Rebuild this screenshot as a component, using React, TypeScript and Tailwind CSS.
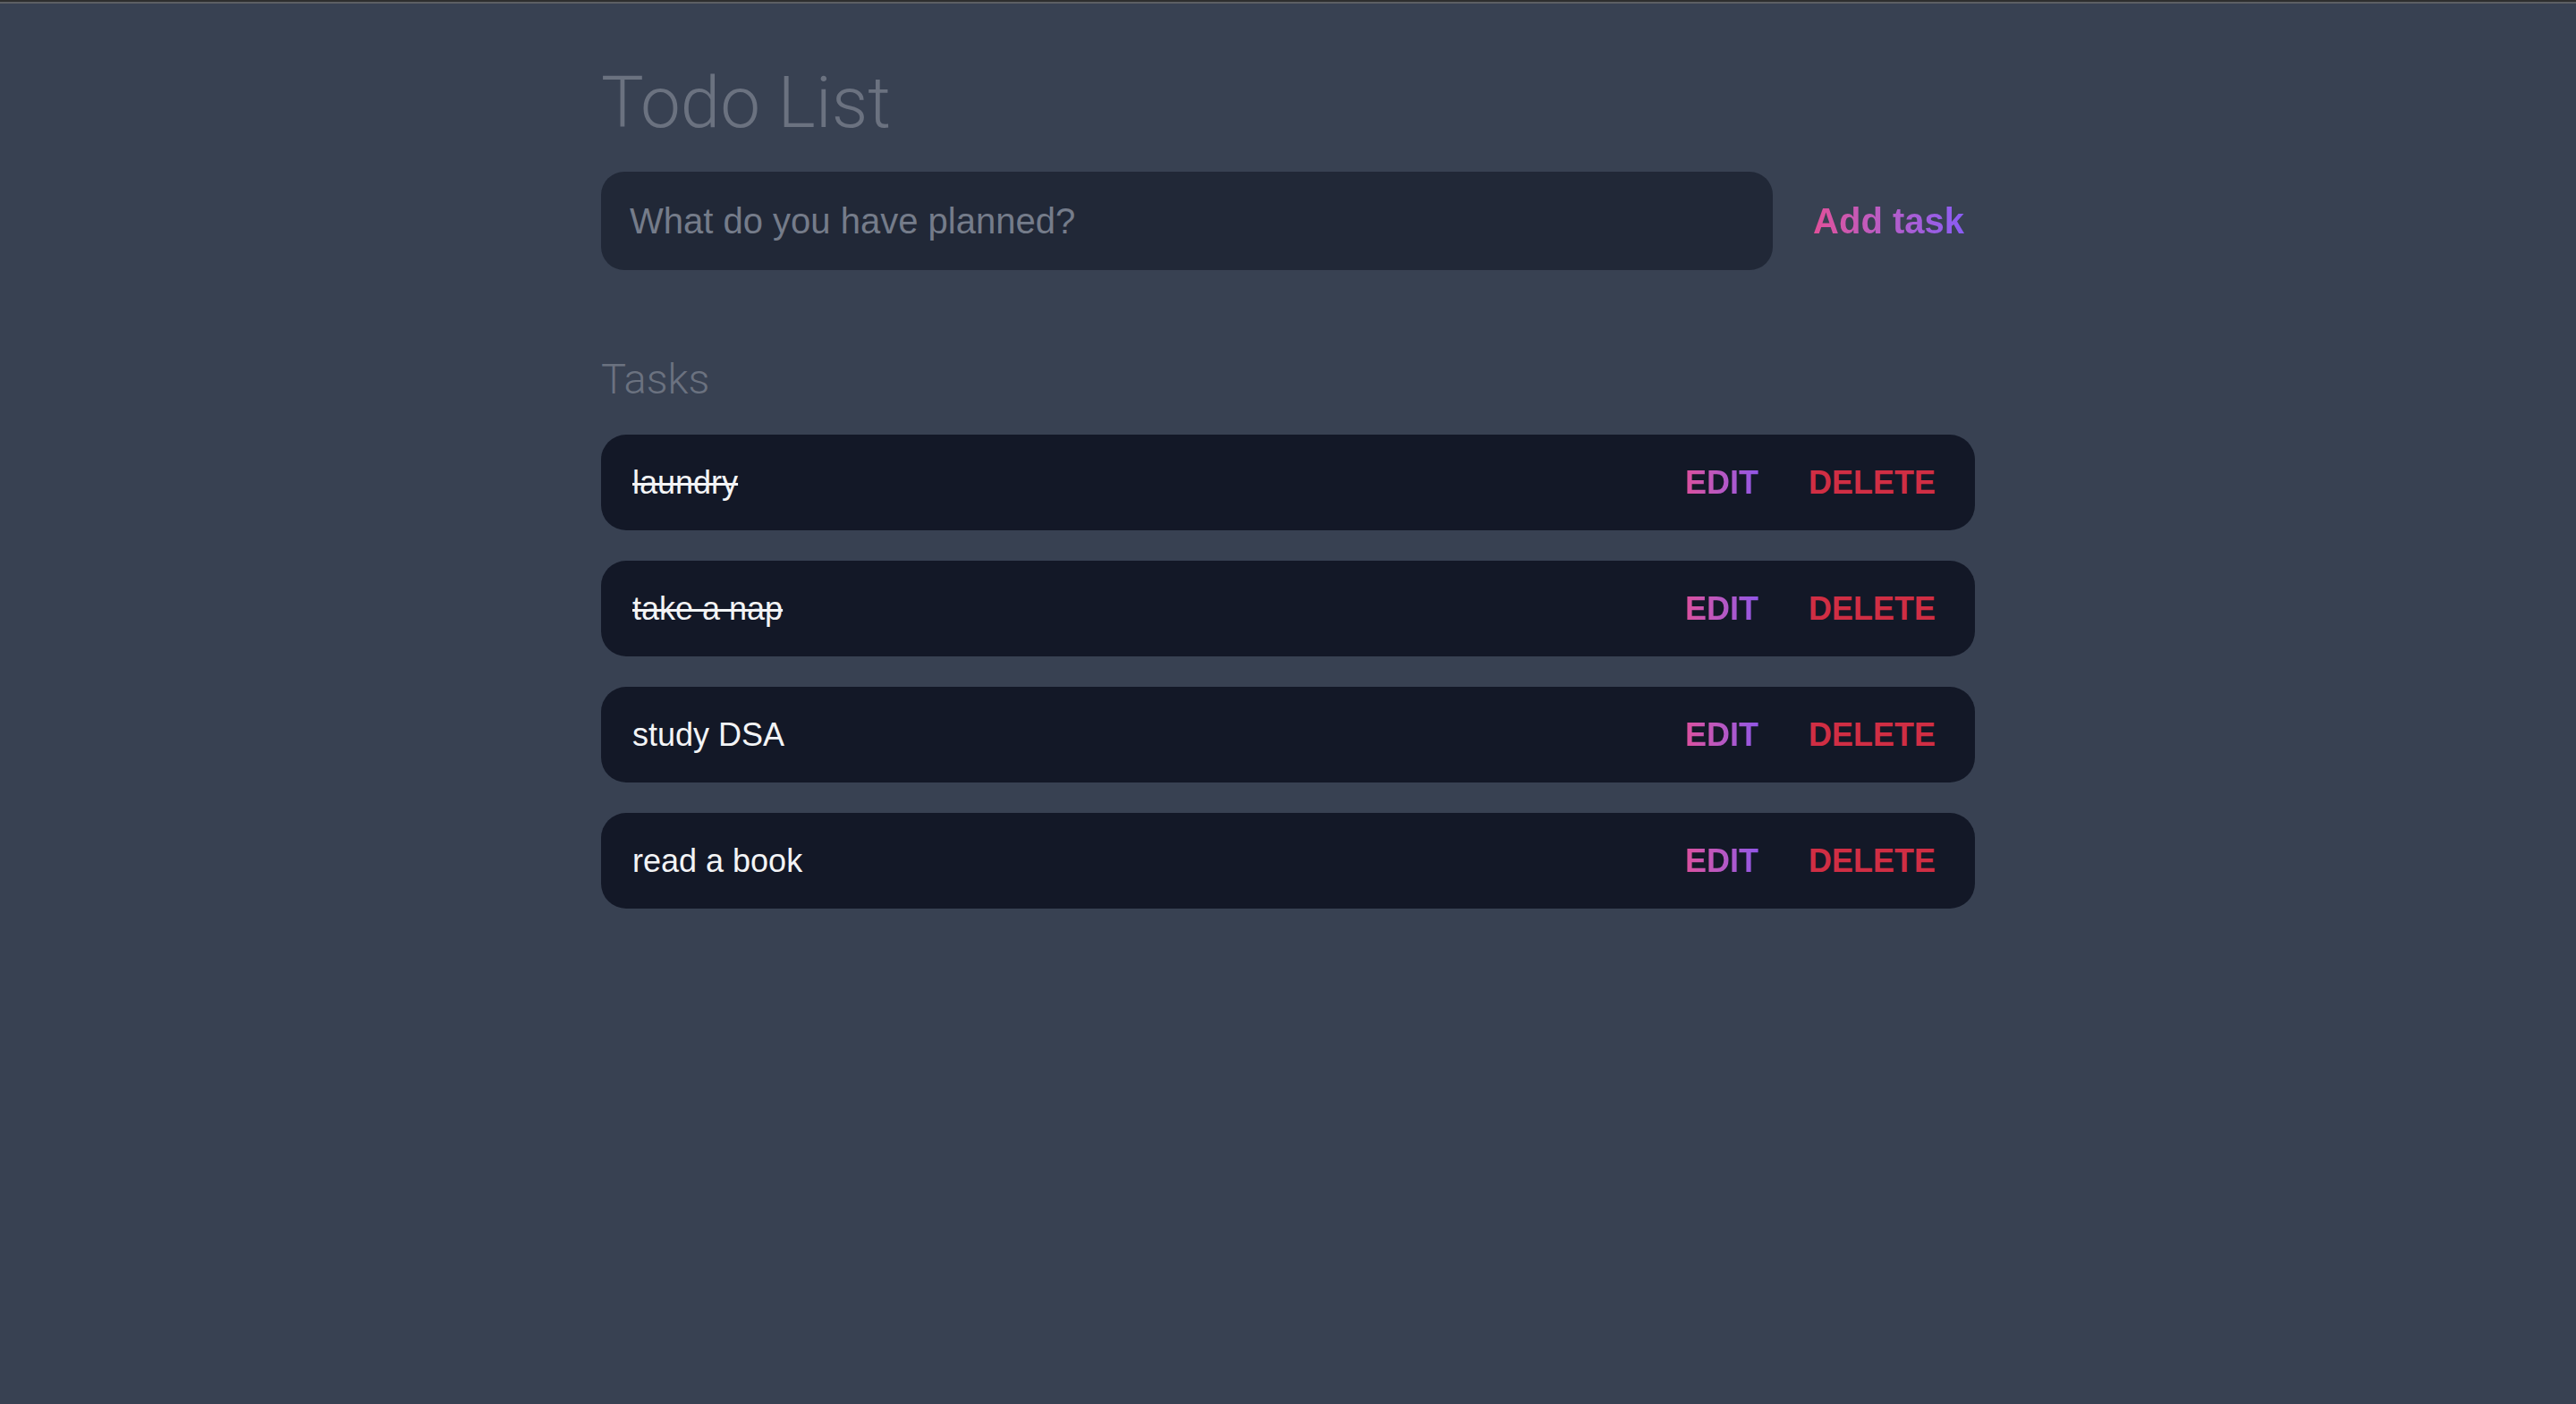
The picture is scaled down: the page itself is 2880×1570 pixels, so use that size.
import { useState } from "react";

type Task = { id: number; text: string; done: boolean };

const initialTasks: Task[] = [
  { id: 1, text: "laundry", done: true },
  { id: 2, text: "take a nap", done: true },
  { id: 3, text: "study DSA", done: false },
  { id: 4, text: "read a book", done: false },
];

function TaskRow({ task }: { task: Task }) {
  return (
    <li className="flex h-[107px] items-center justify-between rounded-[28px] bg-[#131827] pl-[35px] pr-[44px]">
      <span
        className={
          task.done
            ? "text-[36px] text-[#f3f4f6] line-through decoration-[#f3f4f6] decoration-[3px]"
            : "text-[36px] text-[#f3f4f6]"
        }
      >
        {task.text}
      </span>
      <div className="flex items-center gap-[56px] text-[36px] font-bold">
        <button className="bg-linear-to-r from-[#dc4f9e] to-[#9256e6] bg-clip-text text-transparent">
          EDIT
        </button>
        <button className="text-[#d02e44]">DELETE</button>
      </div>
    </li>
  );
}

export default function App() {
  const [tasks] = useState(initialTasks);

  return (
    <div className="min-h-screen bg-[#384152] font-['Liberation_Sans',Arial,sans-serif]">
      <div className="h-[2px] bg-[#2e2e2e]" />
      <div className="h-[2px] bg-[#5d5f63]" />
      <main className="mx-auto w-[1536px] pt-[71px]">
        <h1 className="h-[80px] font-['Roboto',sans-serif] text-[80px] font-light leading-[80px] text-[#6b7280]">
          Todo List
        </h1>

        <form
          className="mt-[37px] flex items-center gap-[33px]"
          onSubmit={(e) => e.preventDefault()}
        >
          <input
            type="text"
            placeholder="What do you have planned?"
            className="h-[110px] flex-1 rounded-[26px] bg-[#212837] px-[32px] text-[40px] text-[#e5e7eb] outline-none placeholder:text-[#757c8a]"
          />
          <button type="submit" className="px-[12px] text-[40px] font-bold">
            <span className="bg-linear-to-r from-[#e04f99] to-[#8a5cf5] bg-clip-text text-transparent">
              Add task
            </span>
          </button>
        </form>

        <h2 className="mt-[98px] h-[48px] font-['Roboto',sans-serif] text-[47px] font-light leading-[48px] text-[#6b7280]">
          Tasks
        </h2>

        <ul className="mt-[38px] flex flex-col gap-[34px]">
          {tasks.map((t) => (
            <TaskRow key={t.id} task={t} />
          ))}
        </ul>
      </main>
    </div>
  );
}
